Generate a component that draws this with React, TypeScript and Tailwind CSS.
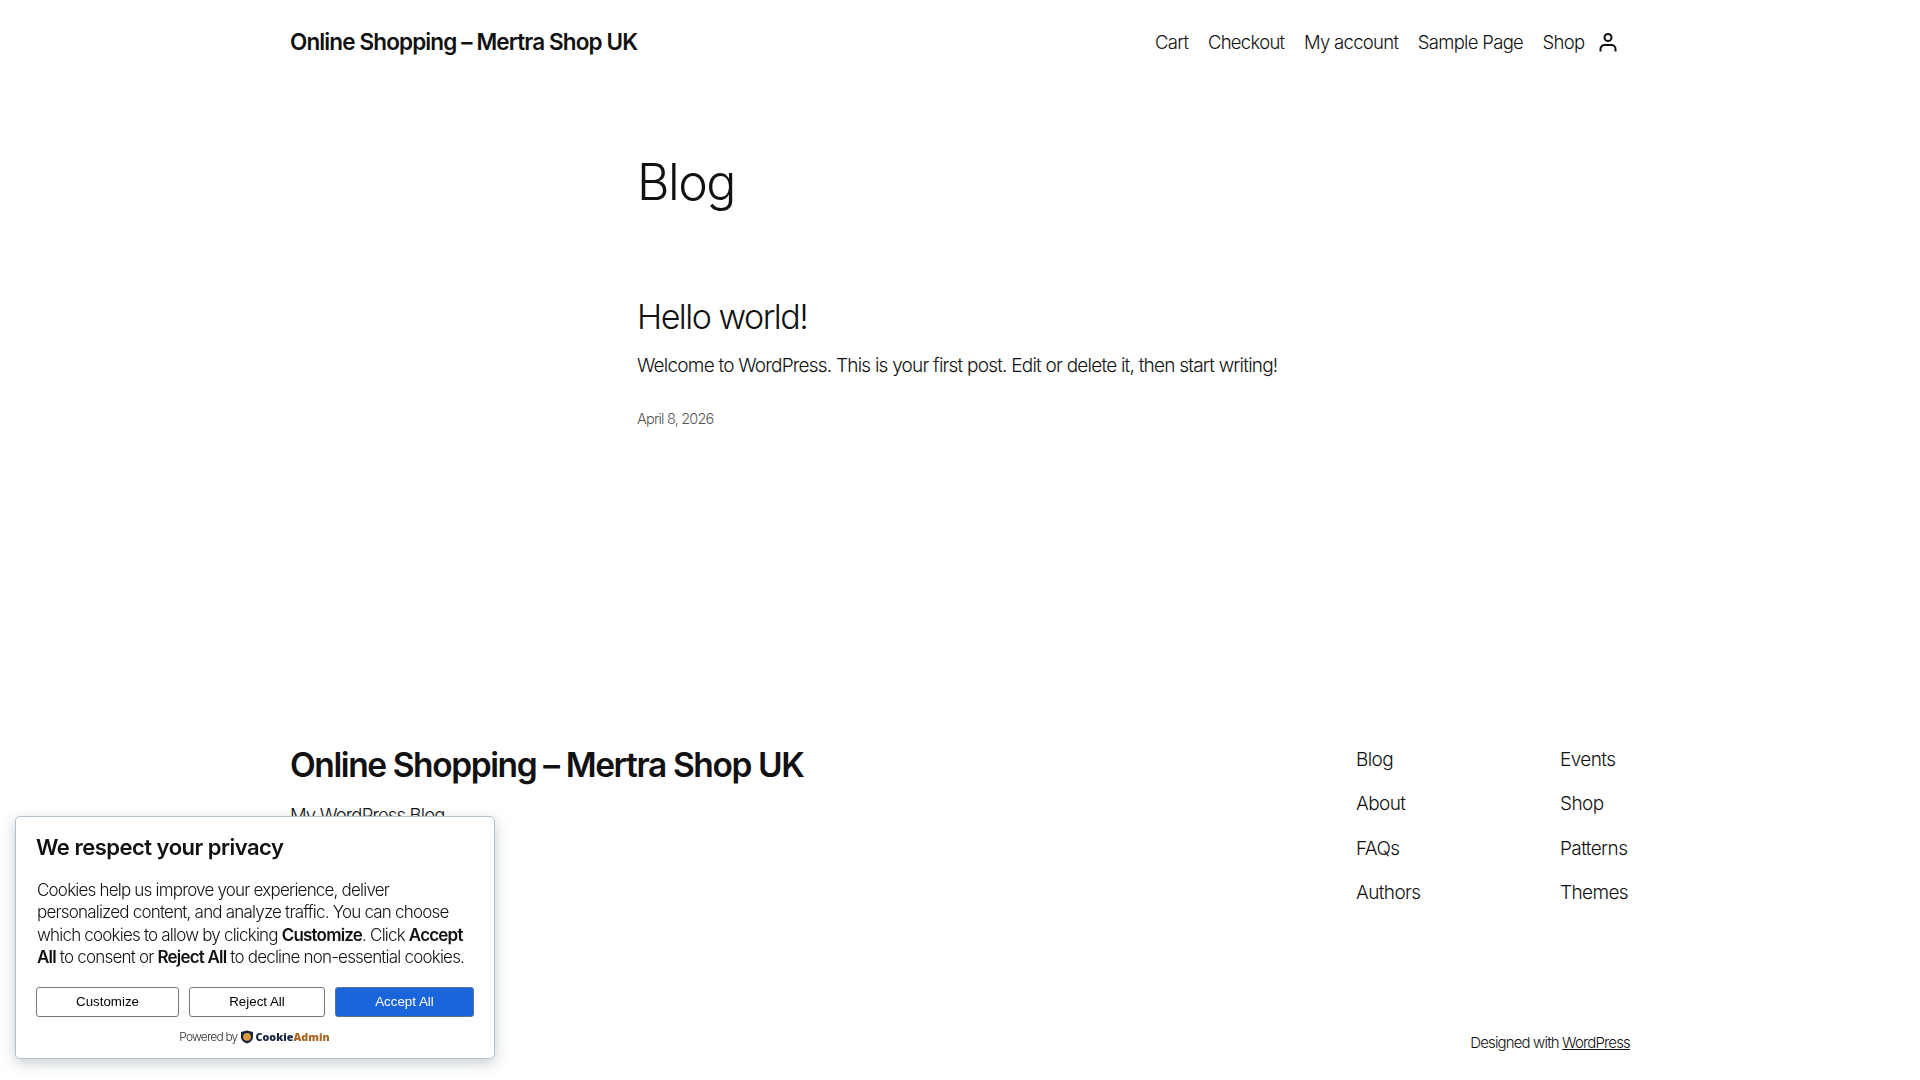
import React from "react";

const navLinks = ["Cart", "Checkout", "My account", "Sample Page", "Shop"];
const footerCols = [
  ["Blog", "About", "FAQs", "Authors"],
  ["Events", "Shop", "Patterns", "Themes"],
];

const CookieBanner = () => (
  <div className="fixed left-[15px] bottom-[21px] w-[480px] h-[243px] bg-white border border-[#b4c0cc] rounded-[5px] shadow-[0_4px_14px_rgba(90,110,130,0.35)] pt-[15px] px-[20px]">
    <h2 className="text-[22px] leading-[30px] font-semibold tracking-[-0.5px] text-[#111]">We respect your privacy</h2>
    <p className="mt-[17px] ml-[1px] text-[17px] leading-[22.3px] font-light tracking-[-0.8px] text-[#111] whitespace-nowrap">
      Cookies help us improve your experience, deliver
      <br />
      personalized content, and analyze traffic. You can choose
      <br />
      which cookies to allow by clicking <b className="font-semibold">Customize</b>. Click <b className="font-semibold">Accept</b>
      <br />
      <b className="font-semibold">All</b> to consent or <b className="font-semibold">Reject All</b> to decline non-essential cookies.
    </p>
    <div className="flex gap-[10px] mt-[19px] font-['Liberation_Sans',sans-serif] text-[13.33px]">
      <button className="w-[143px] h-[30px] bg-white border border-[#777] rounded-[3px] text-black">Customize</button>
      <button className="w-[136px] h-[30px] bg-white border border-[#777] rounded-[3px] text-black">Reject All</button>
      <button className="w-[139px] h-[30px] bg-[#1a64dc] border border-[#5a7390] rounded-[3px] text-white">Accept All</button>
    </div>
    <div className="flex items-center justify-center gap-[2px] mt-[8px] h-[24px] ml-[-1px]">
      <span className="text-[12px] font-light tracking-[-0.8px] text-[#333]">Powered by</span>
      <svg width="14" height="14" viewBox="0 0 14 14">
        <path d="M7 0.5 L13 2 V7 C13 10.5 10 12.5 7 13.5 C4 12.5 1 10.5 1 7 V2 Z" fill="#14263f" />
        <circle cx="7" cy="6.8" r="3.9" fill="#dd9a3c" />
      </svg>
      <span className="text-[10.7px] font-extrabold tracking-[0.05px] font-['Open_Sans',sans-serif]">
        <span className="text-[#14263f]">Cookie</span>
        <span className="text-[#a8651f]">Admin</span>
      </span>
    </div>
  </div>
);

export default function App() {
  return (
    <div className="relative h-screen overflow-hidden bg-white text-[#111] font-['Inter',sans-serif]">
      <header className="flex items-center justify-between h-[84px] px-[290px]">
        <a className="text-[22.5px] font-semibold tracking-[-0.87px]">Online Shopping – Mertra Shop UK</a>
        <nav className="flex items-center gap-[19.5px] text-[18.5px] font-light tracking-[-0.7px] pt-[1px]">
          {navLinks.map((l) => (
            <a key={l}>{l}</a>
          ))}
          <svg className="w-[24px] h-[24px] ml-[-8px] mr-[10px] mt-[-2px]" viewBox="0 0 24 24" fill="none" stroke="#111" strokeWidth="2">
            <circle cx="12" cy="7.5" r="3.5" />
            <path d="M4.5 21.5 V19 A4 4 0 0 1 8.5 15 H15.5 A4 4 0 0 1 19.5 19 V21.5" />
          </svg>
        </nav>
      </header>

      <main className="ml-[637px] w-[646px]">
        <h1 className="mt-[60px] text-[50px] leading-[76px] font-light tracking-[-1.5px]">Blog</h1>
        <h2 className="mt-[74.5px] text-[34px] leading-[44px] font-light tracking-[-1.5px]">Hello world!</h2>
        <p className="mt-[10px] text-[19px] leading-[34px] font-light tracking-[-0.78px] whitespace-nowrap">
          Welcome to WordPress. This is your first post. Edit or delete it, then start writing!
        </p>
        <p className="mt-[25.5px] text-[14.5px] leading-[22px] font-light tracking-[-0.8px] text-[#555]">April 8, 2026</p>
      </main>

      <footer className="mt-[310px] px-[290px]">
        <div className="flex justify-between">
          <div>
            <h2 className="pt-[1px] text-[33.5px] leading-[48px] font-semibold tracking-[-1.4px]">Online Shopping – Mertra Shop UK</h2>
            <p className="mt-[12px] text-[18.5px] leading-[28px] font-light tracking-[-0.85px]">My WordPress Blog</p>
          </div>
          <div className="flex pt-[6px]">
            {footerCols.map((col, i) => (
              <ul key={i} className={i === 0 ? "w-[204px]" : "w-[70px]"}>
                {col.map((l) => (
                  <li key={l} className="h-[44.4px] text-[19px] font-light tracking-[-0.6px] whitespace-nowrap">{l}</li>
                ))}
              </ul>
            ))}
          </div>
        </div>
        <p className="mt-[108px] text-right text-[15px] font-light tracking-[-0.85px]">
          Designed with <a className="underline">WordPress</a>
        </p>
      </footer>

      <CookieBanner />
    </div>
  );
}
